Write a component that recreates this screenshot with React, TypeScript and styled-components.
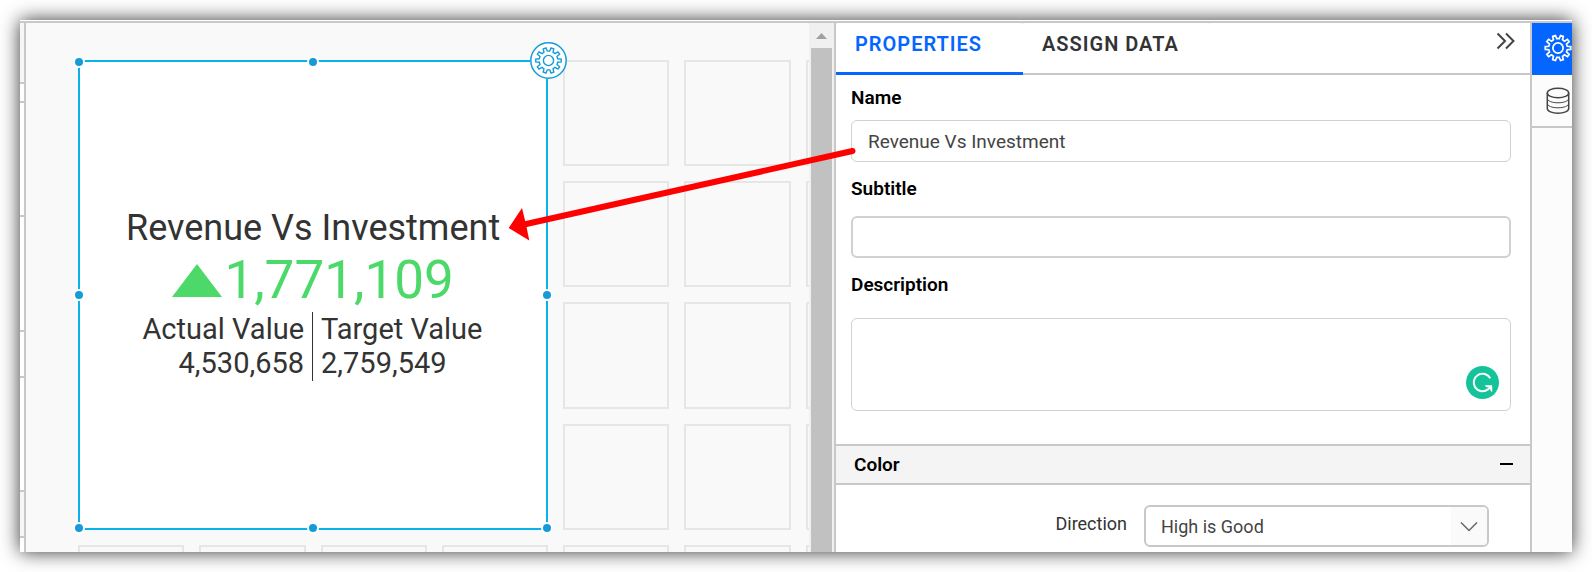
import React from 'react';
import styled, { createGlobalStyle, css } from 'styled-components';

const LINE = '#c8c8c8';
const BLUE = '#0565ff';
const CYAN = '#0ab1ea';
const HANDLE = '#169bd9';

const GlobalStyle = createGlobalStyle`
  *, *::before, *::after { box-sizing: border-box; }
  body {
    margin: 0;
    background: #fff;
    color: #333;
    font-family: Roboto, "Liberation Sans", sans-serif;
  }
  button, input, textarea, select { font: inherit; color: inherit; }
`;

const Page = styled.div`
  height: 100vh;
  padding: 20px;
`;

const Frame = styled.main`
  position: relative;
  height: 100%;
  display: flex;
  padding-top: 3px;
  background: linear-gradient(#fff 1px, ${LINE} 1px, ${LINE} 3px, #fff 3px);
  box-shadow: 0 0 18px rgba(0, 0, 0, 0.8);
`;

const Clip = styled.div`
  flex: 1;
  min-width: 0;
  display: flex;
  overflow: hidden;
`;

const EdgeList = styled.aside`
  flex: none;
  width: 6px;
  overflow: hidden;
  border-right: 2px solid ${LINE};
`;

const EdgeItem = styled.div<{ $h: number; $tint?: boolean }>`
  height: ${(p) => p.$h}px;
  border-bottom: 2px solid ${LINE};
  background: ${(p) => (p.$tint ? '#f6f6f6' : '#fff')};
`;

const Workspace = styled.section`
  flex: 1;
  min-width: 0;
  overflow: hidden;
  padding: 37px 0 0 52px;
  background: #f9f9f9;
`;

const Board = styled.div`
  width: 834px;
  height: 591px;
  display: grid;
  grid-template-columns: repeat(7, 1fr);
  grid-template-rows: repeat(5, 1fr);
  gap: 15px;
`;

const Tile = styled.div`
  border: 2px solid #e6e6e6;
`;

const Card = styled.article`
  grid-area: 1 / 1 / span 4 / span 4;
  position: relative;
  display: flex;
  flex-direction: column;
  align-items: center;
  justify-content: center;
  padding-bottom: 1px;
  border: 2px solid ${CYAN};
  background: #fff;
`;

const CardTitle = styled.h2`
  margin: 0;
  font-size: 36px;
  line-height: 42px;
  font-weight: 400;
`;

const Variance = styled.div`
  display: flex;
  align-items: center;
  gap: 2px;
  color: #4cd969;
  font-size: 53px;
  line-height: 63px;
`;

const Measures = styled.dl`
  align-self: stretch;
  display: grid;
  grid-template-columns: 1fr 1fr;
  margin: 0;
  font-size: 29px;
  line-height: 34px;
`;

const Measure = styled.div<{ $side: 'left' | 'right' }>`
  padding: 0 8px 1px;
  ${(p) =>
    p.$side === 'left'
      ? css`
          text-align: right;
          border-right: 1px solid #333;
        `
      : css`
          text-align: left;
        `}
  dt, dd { margin: 0; }
`;

const Handle = styled.span<{ $x: 'start' | 'mid' | 'end'; $y: 'start' | 'mid' | 'end' }>`
  position: absolute;
  width: 12px;
  height: 12px;
  margin: -6px;
  border: 2px solid #fff;
  border-radius: 50%;
  background: ${HANDLE};
  left: ${(p) => ({ start: '-1px', mid: '50%', end: 'calc(100% + 1px)' })[p.$x]};
  top: ${(p) => ({ start: '0', mid: '50%', end: '100%' })[p.$y]};
`;

const CardSettings = styled.button`
  position: absolute;
  top: -20px;
  right: -21px;
  width: 37px;
  height: 37px;
  padding: 0;
  border: 0;
  border-radius: 50%;
  background: #fff;
  color: ${HANDLE};

  svg { display: block; }
`;

const Scrollbar = styled.div`
  flex: none;
  width: 25px;
  display: flex;
  flex-direction: column;
  align-items: center;
  background: #f0f0f0;
`;

const ScrollArrow = styled.div`
  height: 25px;
  display: grid;
  place-items: center;
`;

const ScrollThumb = styled.div`
  flex: 1;
  width: 21px;
  background: #c1c1c1;
`;

const Panel = styled.section`
  flex: none;
  width: 696px;
  display: flex;
  flex-direction: column;
  border-left: 2px solid ${LINE};
  background: #fff;
`;

const TabBar = styled.header`
  flex: none;
  height: 52px;
  display: flex;
  background: #f0f0f0;
`;

const Tab = styled.button<{ $active?: boolean }>`
  width: 187px;
  padding: 0 0 ${(p) => (p.$active ? 8 : 9)}px 19px;
  border: 0;
  border-bottom: ${(p) => (p.$active ? `3px solid ${BLUE}` : `2px solid ${LINE}`)};
  border-radius: 4px 4px 0 0 / 2px 2px 0 0;
  background: #fff;
  color: ${(p) => (p.$active ? BLUE : '#333')};
  font-size: 20px;
  line-height: 24px;
  font-weight: 600;
  letter-spacing: 1px;
  text-align: left;
  white-space: nowrap;
`;

const TabBarRest = styled.div`
  flex: 1;
  display: flex;
  justify-content: flex-end;
  align-items: flex-start;
  padding: 8px 13px 0 0;
  border-bottom: 2px solid ${LINE};
  background: #fff;
`;

const IconButton = styled.button`
  display: grid;
  place-items: center;
  padding: 0;
  border: 0;
  background: none;
  color: #444;
`;

const Fields = styled.div`
  flex: none;
  display: flex;
  flex-direction: column;
  padding: 11px 19px 33px 15px;
`;

const FieldLabel = styled.label<{ $gap: number }>`
  margin-bottom: ${(p) => p.$gap}px;
  color: #000;
  font-size: 19px;
  line-height: 24px;
  font-weight: 600;
`;

const TextBox = styled.input<{ $thick?: boolean }>`
  height: 42px;
  margin-bottom: 15px;
  padding: 0 16px;
  border: ${(p) => (p.$thick ? 2 : 1)}px solid #d1d1d1;
  border-radius: 6px;
  background: #fff;
  font-size: 19px;
  color: #444;
  outline: 0;
`;

const AreaWrap = styled.div`
  position: relative;
  display: flex;
`;

const Area = styled.textarea`
  flex: 1;
  height: 93px;
  padding: 10px 16px;
  border: 1px solid #d1d1d1;
  border-radius: 6px;
  background: #fff;
  resize: none;
  outline: 0;
`;

const AssistBadge = styled.button`
  position: absolute;
  right: 12px;
  bottom: 12px;
  width: 33px;
  height: 33px;
  padding: 0;
  border: 0;
  background: none;
`;

const SectionHead = styled.div`
  flex: none;
  height: 41px;
  display: flex;
  align-items: center;
  justify-content: space-between;
  padding: 0 17px 0 18px;
  border: solid ${LINE};
  border-width: 2px 0;
  background: #f4f4f4;
  color: #000;
`;

const SectionTitle = styled.h3`
  margin: 0;
  font-size: 19px;
  line-height: 24px;
  font-weight: 600;
`;

const OptionRow = styled.div`
  display: flex;
  justify-content: flex-end;
  gap: 17px;
  padding: 20px 41px 0 0;
`;

const OptionLabel = styled.label`
  font-size: 18px;
  line-height: 38px;
`;

const SelectWrap = styled.div`
  position: relative;
  width: 345px;
`;

const Select = styled.select`
  appearance: none;
  width: 100%;
  height: 42px;
  padding: 0 50px 0 15px;
  border: 2px solid ${LINE};
  border-radius: 6px;
  background: #fff;
  color: #444;
  font-size: 18px;
`;

const SelectArrow = styled.span`
  position: absolute;
  top: 2px;
  right: 2px;
  bottom: 2px;
  width: 36px;
  display: grid;
  place-items: center;
  border-radius: 0 4px 4px 0;
  background: #fafafa;
  color: #666;
  pointer-events: none;
`;

const Rail = styled.nav`
  flex: none;
  width: 42px;
  overflow: hidden;
  border-left: 2px solid ${LINE};
  background: #fcfcfc;
`;

const RailButton = styled.button<{ $active?: boolean }>`
  display: grid;
  place-items: center;
  width: 52px;
  height: ${(p) => (p.$active ? 52 : 53)}px;
  padding: 0 0 ${(p) => (p.$active ? 2 : 0)}px;
  border: 0 solid ${LINE};
  border-bottom-width: ${(p) => (p.$active ? 0 : 2)}px;
  background: ${(p) => (p.$active ? BLUE : 'transparent')};
  color: ${(p) => (p.$active ? '#fff' : '#444')};
`;

const Callout = styled.svg`
  position: absolute;
  top: 0;
  right: 712px;
  width: 360px;
  height: 240px;
  pointer-events: none;
`;

const gearOutline = (() => {
  const teeth = 10;
  const step = (Math.PI * 2) / teeth;
  const at = (r: number, a: number) =>
    `${(r * Math.sin(a)).toFixed(2)} ${(r * Math.cos(a)).toFixed(2)}`;
  const points: string[] = [];
  for (let i = 0; i < teeth; i += 1) {
    const a = (i + 0.5) * step;
    points.push(
      at(9.4, a - step * 0.3),
      at(12.8, a - step * 0.18),
      at(12.8, a + step * 0.18),
      at(9.4, a + step * 0.3),
    );
  }
  return `M${points.join('L')}Z`;
})();

function Gear({ weight, ring }: { weight: number; ring?: boolean }) {
  const size = ring ? 37 : 30;
  return (
    <svg
      width={size}
      height={size}
      viewBox={`${-size / 2} ${-size / 2} ${size} ${size}`}
      fill="none"
      stroke="currentColor"
      strokeWidth={weight}
      aria-hidden="true"
    >
      {ring && <circle r="17.7" strokeWidth="1.5" />}
      <path d={gearOutline} />
      <circle r="5.1" />
    </svg>
  );
}

function Database() {
  return (
    <svg width="26" height="28" viewBox="0 0 26 28" fill="none" stroke="currentColor" strokeWidth="1.5" aria-hidden="true">
      <ellipse cx="13" cy="6" rx="10.7" ry="4.7" />
      <path d="M2.3 6v15.6c0 2.6 4.8 4.7 10.7 4.7s10.7-2.1 10.7-4.7V6" />
      <path d="M2.3 11.4c0 2.6 4.8 4.4 10.7 4.4s10.7-1.8 10.7-4.4M2.3 16.4c0 2.6 4.8 4.4 10.7 4.4s10.7-1.8 10.7-4.4" strokeWidth="1" />
    </svg>
  );
}

const edgeItems = [
  { h: 61, tint: true },
  { h: 19 },
  { h: 114 },
  { h: 115 },
  { h: 46 },
  { h: 114 },
  { h: 46, tint: true },
];

const spots = ['start', 'mid', 'end'] as const;

export default function App() {
  return (
    <Page>
      <GlobalStyle />
      <Frame>
        <Clip>
          <EdgeList aria-hidden="true">
            {edgeItems.map((item, i) => (
              <EdgeItem key={i} $h={item.h} $tint={item.tint} />
            ))}
          </EdgeList>

          <Workspace>
            <Board>
              <Card>
                <CardTitle>Revenue Vs Investment</CardTitle>
                <Variance>
                  <svg width="50" height="33" viewBox="0 0 50 33" aria-hidden="true">
                    <path d="M25 0 50 33H0Z" fill="currentColor" />
                  </svg>
                  <span>1,771,109</span>
                </Variance>
                <Measures>
                  <Measure $side="left">
                    <dt>Actual Value</dt>
                    <dd>4,530,658</dd>
                  </Measure>
                  <Measure $side="right">
                    <dt>Target Value</dt>
                    <dd>2,759,549</dd>
                  </Measure>
                </Measures>
                {spots.flatMap((y) =>
                  spots
                    .filter((x) => !(x === 'mid' && y === 'mid') && !(x === 'end' && y === 'start'))
                    .map((x) => <Handle key={x + y} $x={x} $y={y} />),
                )}
                <CardSettings aria-label="Widget settings">
                  <Gear weight={1.4} ring />
                </CardSettings>
              </Card>
              {Array.from({ length: 19 }, (_, i) => (
                <Tile key={i} />
              ))}
            </Board>
          </Workspace>

          <Scrollbar aria-hidden="true">
            <ScrollArrow>
              <svg width="11" height="6" viewBox="0 0 11 6">
                <path d="M5.5 0 11 6H0Z" fill="#a0a0a0" />
              </svg>
            </ScrollArrow>
            <ScrollThumb />
          </Scrollbar>

          <Panel>
            <TabBar>
              <Tab $active>PROPERTIES</Tab>
              <Tab>ASSIGN DATA</Tab>
              <TabBarRest>
                <IconButton aria-label="Collapse panel">
                  <svg width="22" height="20" viewBox="0 0 22 20" fill="none" stroke="currentColor" strokeWidth="2" aria-hidden="true">
                    <path d="M2.5 2.5 10 10l-7.5 7.5M11 2.5 18.5 10 11 17.5" />
                  </svg>
                </IconButton>
              </TabBarRest>
            </TabBar>

            <Fields>
              <FieldLabel htmlFor="name" $gap={10}>Name</FieldLabel>
              <TextBox id="name" defaultValue="Revenue Vs Investment" />
              <FieldLabel htmlFor="subtitle" $gap={15}>Subtitle</FieldLabel>
              <TextBox id="subtitle" $thick />
              <FieldLabel htmlFor="description" $gap={21}>Description</FieldLabel>
              <AreaWrap>
                <Area id="description" />
                <AssistBadge aria-label="Writing assistant">
                  <svg width="33" height="33" viewBox="0 0 33 33" fill="none" aria-hidden="true">
                    <circle cx="16.5" cy="16.5" r="16.5" fill="#15c39a" />
                    <path d="M24.3 12.4A8.8 8.8 0 1 0 22 23.4L24.8 20.5" stroke="#fff" strokeWidth="2" />
                    <path d="M18.5 19.3H26.2V26.2L24.2 24.2V21.3H20.5Z" fill="#fff" />
                  </svg>
                </AssistBadge>
              </AreaWrap>
            </Fields>

            <SectionHead>
              <SectionTitle>Color</SectionTitle>
              <IconButton aria-label="Collapse Color">
                <svg width="13" height="3" viewBox="0 0 13 3" aria-hidden="true">
                  <rect width="13" height="2" fill="#000" />
                </svg>
              </IconButton>
            </SectionHead>

            <OptionRow>
              <OptionLabel htmlFor="direction">Direction</OptionLabel>
              <SelectWrap>
                <Select id="direction" defaultValue="high">
                  <option value="high">High is Good</option>
                  <option value="low">Low is Good</option>
                </Select>
                <SelectArrow>
                  <svg width="18" height="11" viewBox="0 0 18 11" fill="none" stroke="currentColor" strokeWidth="1.5" aria-hidden="true">
                    <path d="M1 1.5 9 9.5 17 1.5" />
                  </svg>
                </SelectArrow>
              </SelectWrap>
            </OptionRow>
          </Panel>

          <Rail>
            <RailButton $active aria-label="Settings">
              <Gear weight={1.7} />
            </RailButton>
            <RailButton aria-label="Data sources">
              <Database />
            </RailButton>
          </Rail>
        </Clip>

        <Callout viewBox="0 0 360 240" aria-hidden="true">
          <path d="M352.5 131 24 204.5" stroke="#f00" strokeWidth="6" strokeLinecap="round" />
          <path d="M8.7 208 22 188 26 204.5 29.3 220.5Z" fill="#f00" />
        </Callout>
      </Frame>
    </Page>
  );
}
